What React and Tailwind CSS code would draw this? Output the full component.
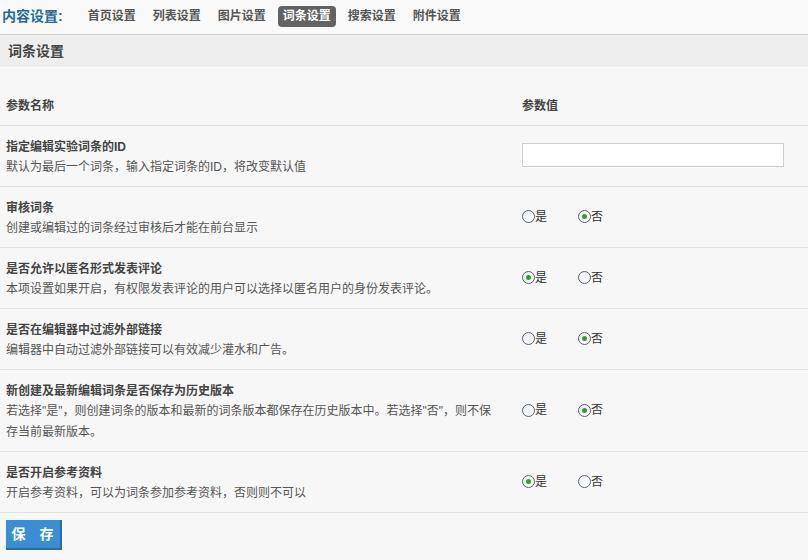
import React from "react";

const tabs = ["首页设置", "列表设置", "图片设置", "词条设置", "搜索设置", "附件设置"];

const rows = [
  {
    title: "指定编辑实验词条的ID",
    desc: ["默认为最后一个词条，输入指定词条的ID，将改变默认值"],
    input: true,
  },
  { title: "审核词条", desc: ["创建或编辑过的词条经过审核后才能在前台显示"], value: "no" },
  {
    title: "是否允许以匿名形式发表评论",
    desc: ["本项设置如果开启，有权限发表评论的用户可以选择以匿名用户的身份发表评论。"],
    value: "yes",
  },
  { title: "是否在编辑器中过滤外部链接", desc: ["编辑器中自动过滤外部链接可以有效减少灌水和广告。"], value: "no" },
  {
    title: "新创建及最新编辑词条是否保存为历史版本",
    desc: [
      "若选择\"是\"，则创建词条的版本和最新的词条版本都保存在历史版本中。若选择\"否\"，则不保",
      "存当前最新版本。",
    ],
    value: "no",
  },
  { title: "是否开启参考资料", desc: ["开启参考资料，可以为词条参加参考资料，否则则不可以"], value: "yes" },
];

const Radio = ({ checked, label }) => (
  <span className="flex items-center">
    <span className="flex h-[13px] w-[13px] items-center justify-center rounded-full border border-[#5b6470] bg-gradient-to-br from-[#e8edf2] to-[#ffffff]">
      {checked && <span className="h-[5px] w-[5px] rounded-full bg-[#3a9a3a]" />}
    </span>
    <span className="text-[12px] text-[#333]">{label}</span>
  </span>
);

export default function App() {
  return (
    <div
      className="h-[560px] w-[808px] overflow-hidden bg-[#f7f7f7]"
      style={{ fontFamily: '"Liberation Sans", "Noto Sans CJK SC", sans-serif' }}
    >
      <div className="flex h-[34px] items-center bg-[#f9f9f9] pl-[2px] pb-[2px]">
        <span className="mr-[20px] text-[14px] font-bold text-[#1f6c9c]">内容设置:</span>
        <div className="flex items-center gap-[7px]">
          {tabs.map((t) => (
            <span
              key={t}
              className={
                t === "词条设置"
                  ? "rounded-[4px] bg-[#626262] px-[5px] py-[3px] text-[12px] font-bold leading-[15px] text-white"
                  : "px-[5px] text-[12px] font-bold leading-[15px] text-[#555]"
              }
            >
              {t}
            </span>
          ))}
        </div>
      </div>
      <div className="flex h-[33px] items-center border-t border-[#cfcfcf] bg-[#eeeeee] pl-[8px]">
        <span className="text-[14px] font-bold text-[#444]">词条设置</span>
      </div>
      <div className="border-t border-[#fbfbfb]">
        <div className="flex h-[58px] items-end border-b border-[#e2e2e2] pb-[10px] text-[12px] font-bold text-[#444]">
          <div className="w-[522px] pl-[6px]">参数名称</div>
          <div>参数值</div>
        </div>
        {rows.map((r) => (
          <div key={r.title} className="flex border-b border-[#e2e2e2] pt-[11px] pb-[8px]">
            <div className="w-[522px] pl-[6px] text-[12px]">
              <div className="font-bold leading-[20px] text-[#444]">{r.title}</div>
              {r.desc.map((d) => (
                <div key={d} className="leading-[21px] text-[#555]">
                  {d}
                </div>
              ))}
            </div>
            <div className="flex items-center">
              {r.input ? (
                <div className="mt-[-6px] h-[24px] w-[262px] border border-[#cdcdcd] bg-white" />
              ) : (
                <div className="mt-[-4px] flex items-center gap-[31px]">
                  <Radio checked={r.value === "yes"} label="是" />
                  <Radio checked={r.value === "no"} label="否" />
                </div>
              )}
            </div>
          </div>
        ))}
        <div className="pl-[6px] pt-[7px]">
          <button className="h-[30px] w-[56px] border-r-2 border-b-2 border-[#2a6ea6] bg-[#3a8ed3] text-[14px] font-bold tracking-[5px] pl-[4px] text-white">
            保 存
          </button>
        </div>
      </div>
    </div>
  );
}
